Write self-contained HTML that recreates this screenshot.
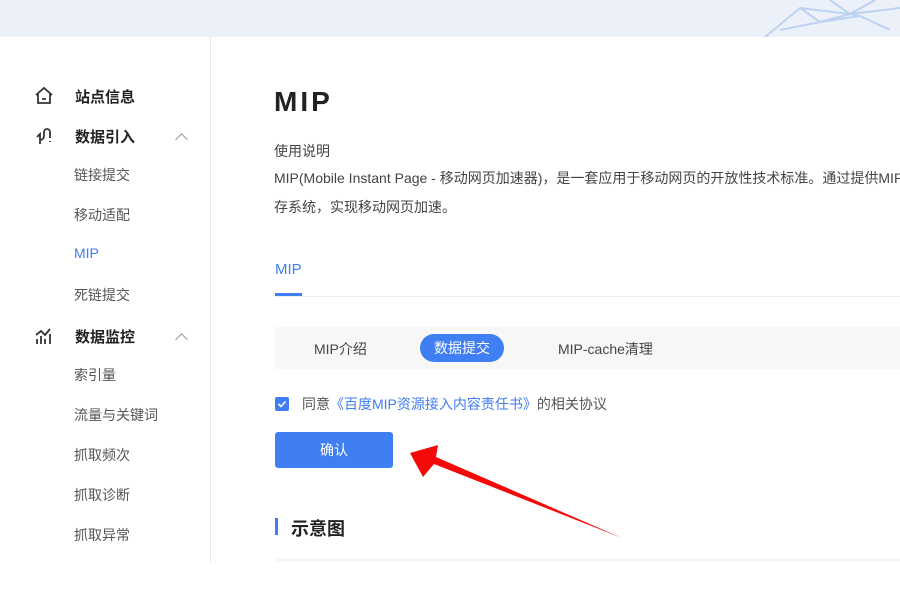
<!DOCTYPE html>
<html><head><meta charset="utf-8"><style>
*{margin:0;padding:0;box-sizing:border-box}
body{width:900px;height:600px;overflow:hidden;background:#fff;font-family:"Liberation Sans","Noto Sans CJK SC",sans-serif;position:relative;color:#333}
.a{position:absolute;white-space:nowrap}
.top{left:0;top:0;width:900px;height:37px;background:#ecf0f8}
.side{left:210px;top:37px;width:1px;height:525px;background:#e8e8e8}
.n{font-size:15px;font-weight:bold;color:#222}
.s{font-size:14px;color:#555}
.chev{width:9px;height:9px;border-left:1.5px solid #999;border-top:1.5px solid #999;transform:rotate(45deg)}
</style></head><body>
<div class="a top"></div>
<svg class="a" style="left:760px;top:0" width="140" height="37"><g stroke="#bcd2f3" fill="none" stroke-width="2"><path d="M5 37 L40 8 L90 14 L140 8"/><path d="M20 30 L60 22 L100 16 L130 30"/><path d="M40 8 L60 22 L90 14 L100 16"/><path d="M70 0 L90 14 L115 0"/></g></svg>
<div class="a side"></div>

<svg class="a" style="left:34px;top:86px" width="20" height="20" fill="none" stroke="#333" stroke-width="1.8"><path d="M2 9 L10 2 L18 9 M4 8 V17 H16 V8 M8 13 H12"/></svg>
<div class="a n" style="left:75px;top:86px">站点信息</div>
<svg class="a" style="left:34px;top:126px" width="20" height="20" fill="none" stroke="#333" stroke-width="1.8"><path d="M3 11 L6 8 L6 18 M6 14 A4 4 0 0 0 10 10 V6 A3 3 0 0 1 16 6 V12 M16 15 V16"/></svg>
<div class="a n" style="left:75px;top:126px">数据引入</div>
<div class="a chev" style="left:177px;top:135px"></div>
<div class="a s" style="left:74px;top:165px">链接提交</div>
<div class="a s" style="left:74px;top:205px">移动适配</div>
<div class="a s" style="left:74px;top:245px;color:#3f7ef3">MIP</div>
<div class="a s" style="left:74px;top:285px">死链提交</div>
<svg class="a" style="left:34px;top:326px" width="20" height="20" fill="none" stroke="#333" stroke-width="1.8"><path d="M2 9 L7 5 L11 9 L16 3 M3 18 V13 M7 18 V10 M11 18 V13 M16 18 V8"/></svg>
<div class="a n" style="left:75px;top:326px">数据监控</div>
<div class="a chev" style="left:177px;top:335px"></div>
<div class="a s" style="left:74px;top:365px">索引量</div>
<div class="a s" style="left:74px;top:405px">流量与关键词</div>
<div class="a s" style="left:74px;top:445px">抓取频次</div>
<div class="a s" style="left:74px;top:485px">抓取诊断</div>
<div class="a s" style="left:74px;top:525px">抓取异常</div>

<div class="a" style="left:274px;top:86px;font-size:28px;font-weight:bold;letter-spacing:3px;color:#222">MIP</div>
<div class="a" style="left:274px;top:141px;font-size:14px;color:#444">使用说明</div>
<div class="a" style="left:274px;top:168px;font-size:14px;color:#444">MIP(Mobile Instant Page - 移动网页加速器)，是一套应用于移动网页的开放性技术标准。通过提供MIP</div>
<div class="a" style="left:274px;top:197px;font-size:14px;color:#444">存系统，实现移动网页加速。</div>
<div class="a" style="left:275px;top:261px;font-size:15px;color:#3f7ef3">MIP</div>
<div class="a" style="left:275px;top:293px;width:27px;height:3px;background:#3f7ef3"></div>
<div class="a" style="left:275px;top:296px;width:625px;height:1px;background:#eee"></div>

<div class="a" style="left:275px;top:327px;width:625px;height:42px;background:#f7f7f8"></div>
<div class="a" style="left:314px;top:339px;font-size:14px;color:#444">MIP介绍</div>
<div class="a" style="left:420px;top:334px;width:84px;height:28px;border-radius:14px;background:#3f7ef3;color:#fff;font-size:14px;text-align:center;line-height:28px">数据提交</div>
<div class="a" style="left:558px;top:339px;font-size:14px;color:#444">MIP-cache清理</div>

<div class="a" style="left:275px;top:397px;width:14px;height:14px;border-radius:2px;background:#3f7ef3"></div>
<svg class="a" style="left:275px;top:397px" width="14" height="14"><path d="M3.5 7 L6 9.5 L10.5 4.5" stroke="#fff" stroke-width="1.6" fill="none"/></svg>
<div class="a" style="left:302px;top:394px;font-size:14px;color:#555">同意<span style="color:#3f7ef3">《百度MIP资源接入内容责任书》</span>的相关协议</div>
<div class="a" style="left:275px;top:432px;width:118px;height:36px;border-radius:3px;background:#3f7ef3;color:#fff;font-size:14px;text-align:center;line-height:36px">确认</div>

<div class="a" style="left:275px;top:518px;width:3px;height:17px;background:#3f7ef3"></div>
<div class="a" style="left:291px;top:515px;font-size:18px;font-weight:bold;color:#222">示意图</div>
<div class="a" style="left:275px;top:558px;width:625px;height:4px;background:#f7f7f8"></div>

<svg class="a" style="left:405px;top:440px" width="225" height="105"><polygon points="5,13 33,5 31,17 217,98 29,24 18,37" fill="#f50a0a"/></svg>
</body></html>
